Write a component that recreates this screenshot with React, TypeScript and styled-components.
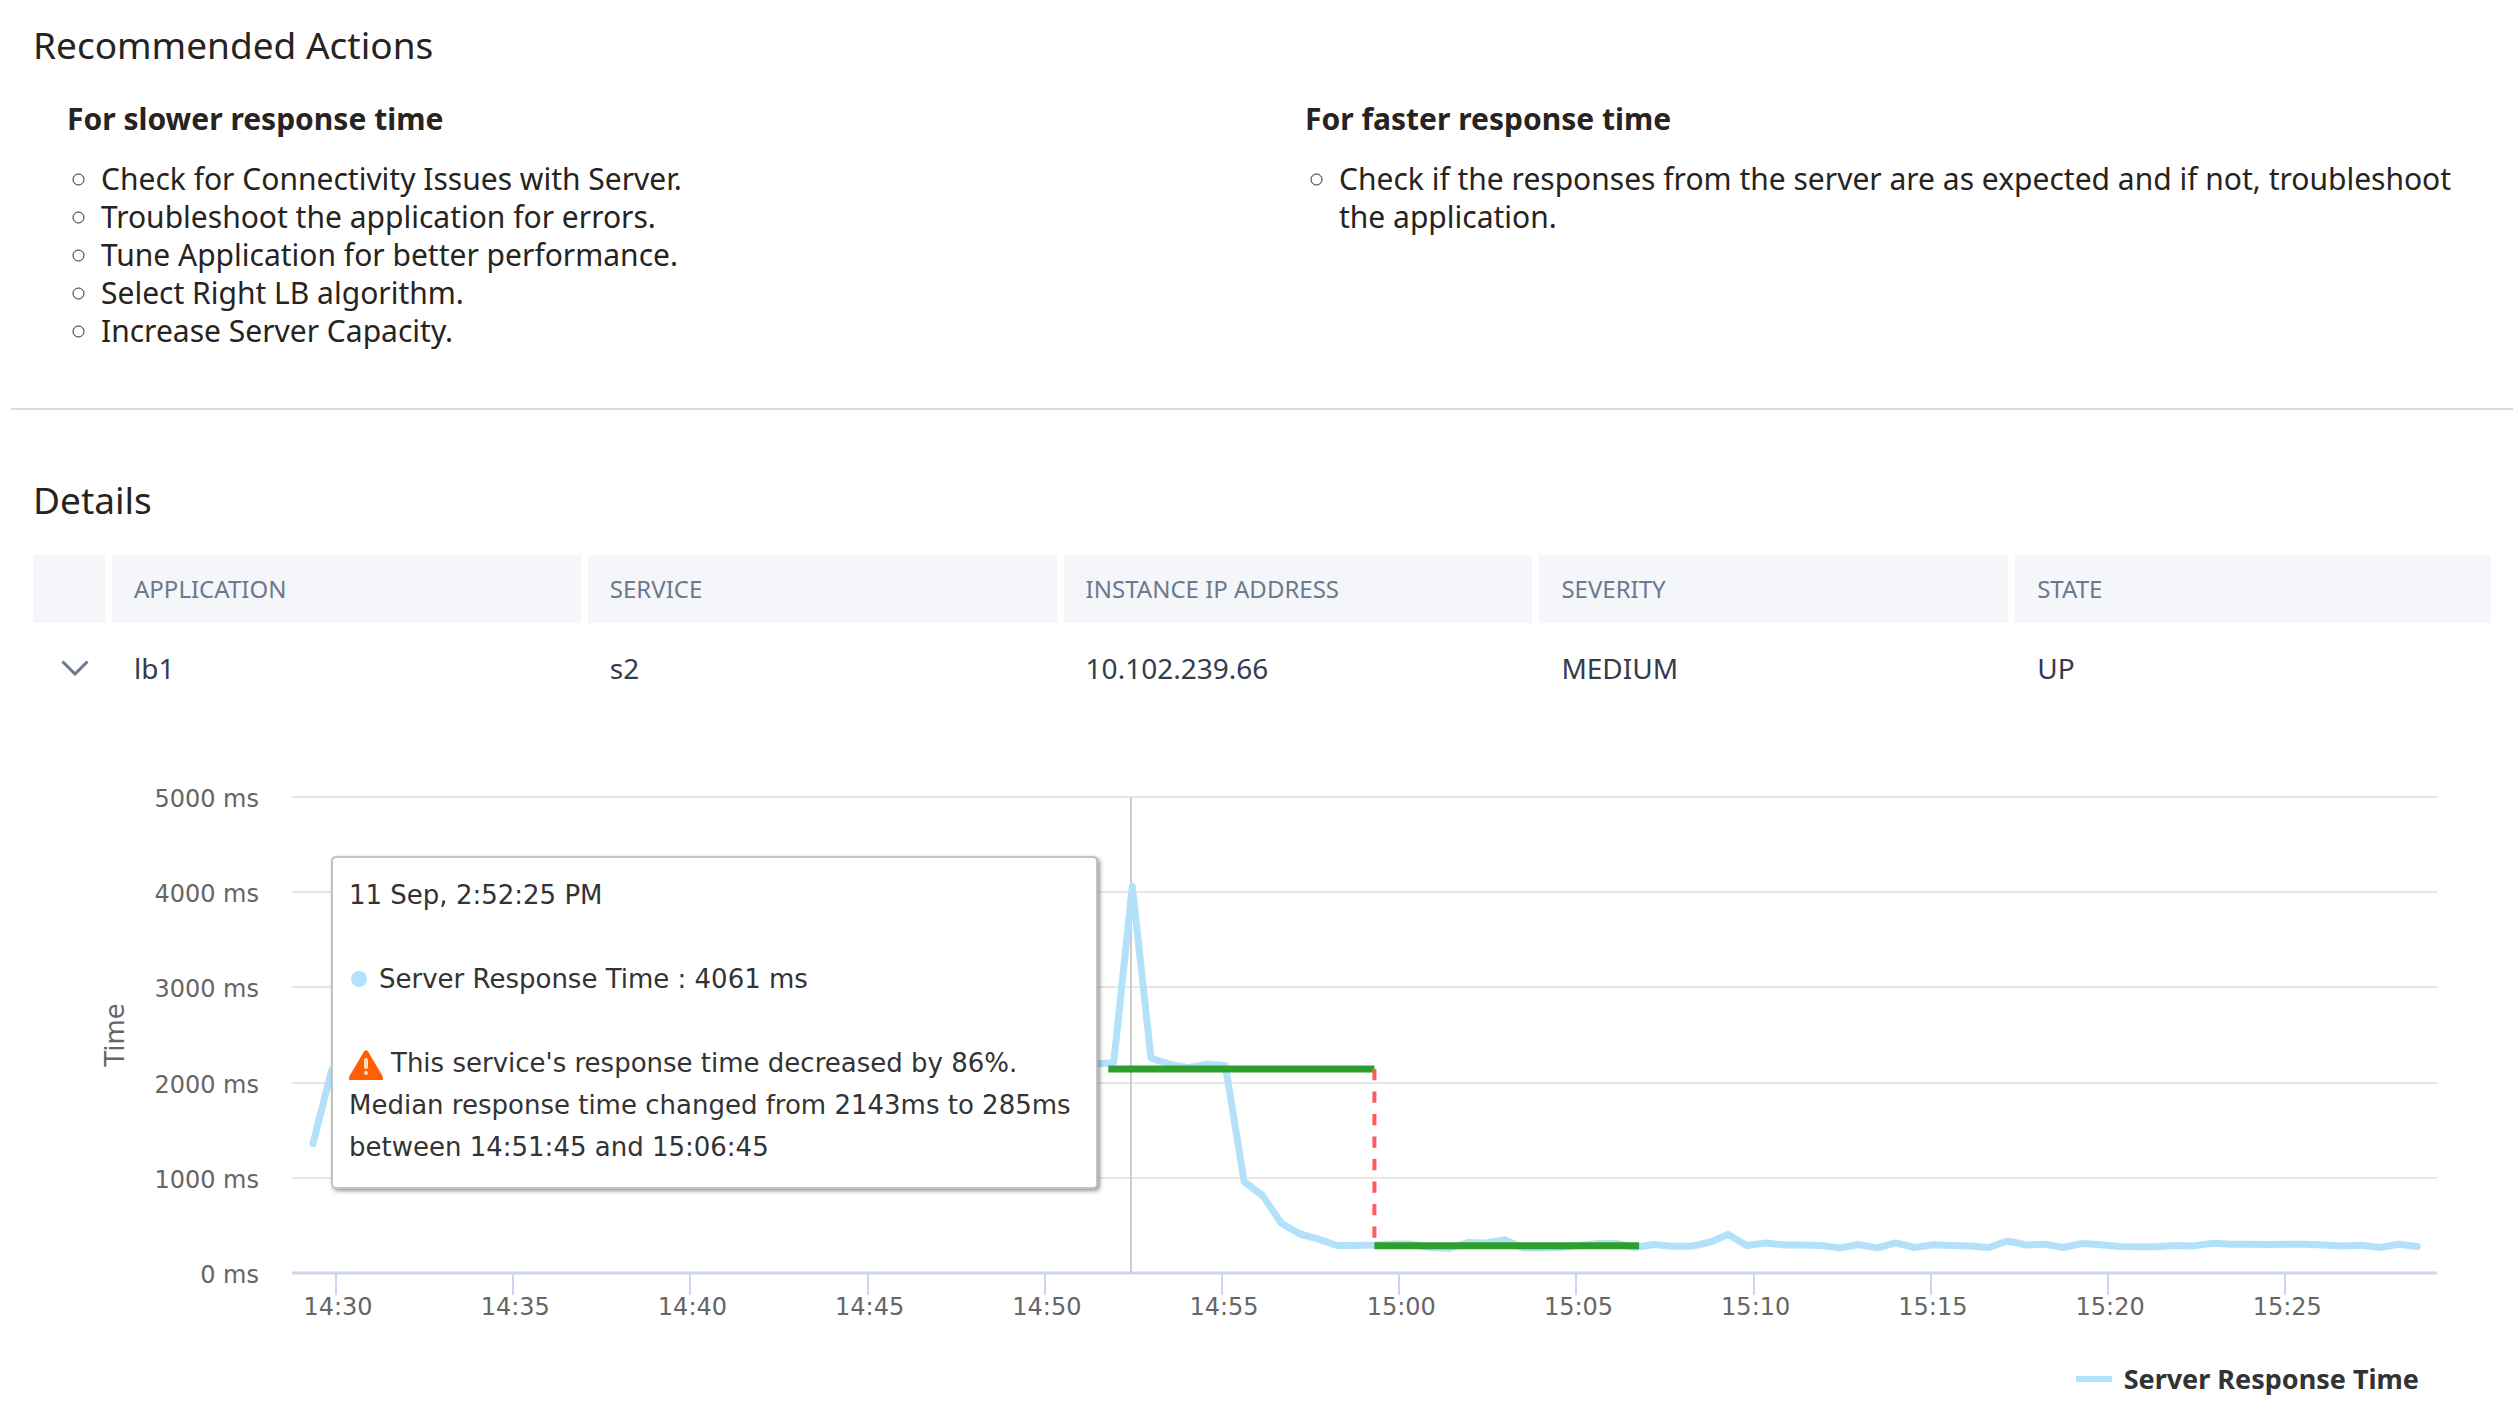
import React, { useLayoutEffect, useRef, useState } from "react";
import styled, { createGlobalStyle } from "styled-components";

const bodyFont = `"Noto Sans", "Open Sans", sans-serif`;
const chartFont = `"DejaVu Sans", "Lucida Grande", sans-serif`;

const GlobalStyle = createGlobalStyle`
  *, *::before, *::after { box-sizing: border-box; }
  body { margin: 0; background: #fff; color: #272320; font-family: ${bodyFont}; }
`;

const Page = styled.main`
  padding-top: 20px;
`;

const SectionTitle = styled.h2`
  margin: 0 33px;
  font-size: 37px;
  line-height: 50px;
  font-weight: 400;
`;

const ActionColumns = styled.div`
  display: grid;
  grid-template-columns: 1fr 1fr;
  margin: 30px 9px 0 33px;
  padding-bottom: 58px;
`;

const ActionGroup = styled.div`
  padding: 0 34px;
`;

const ActionTitle = styled.h3`
  margin: 0 0 22px;
  font-size: 30px;
  line-height: 38px;
  font-weight: 700;
`;

const ActionList = styled.ul`
  margin: 0;
  padding-left: 34px;
  list-style: circle;
  font-size: 30px;
  line-height: 38px;
`;

const Divider = styled.hr`
  margin: 0 5px 65px 11px;
  border: 0;
  border-top: 2px solid #dcdce2;
`;

const DetailsBody = styled.div`
  margin: 30px 27px 0 33px;
`;

const DetailsTable = styled.table`
  width: 100%;
  table-layout: fixed;
  border-collapse: separate;
  border-spacing: 0;
  text-align: left;
`;

const ToggleCol = styled.col`
  width: 79px;
`;

const HeadCell = styled.th`
  height: 68px;
  padding: 0 22px;
  border-right: 7px solid #fff;
  background: #f5f6fa;
  color: #6b798e;
  font-size: 24px;
  line-height: 34px;
  font-weight: 400;
  &:last-child { border-right: 0; }
`;

const Cell = styled.td`
  height: 90px;
  padding: 0 22px;
  color: #333c4e;
  font-size: 28px;
  line-height: 38px;
`;

const ToggleCell = styled(Cell)`
  padding: 0 0 0 26px;
`;

const ToggleButton = styled.button`
  display: flex;
  align-items: center;
  justify-content: center;
  width: 32px;
  height: 32px;
  padding: 0;
  border: 0;
  background: none;
  cursor: pointer;
`;

const ChartArea = styled.section`
  position: relative;
`;

const Plot = styled.svg`
  display: block;
  width: 100%;
  height: 627px;
  font-family: ${chartFont};
`;

const AxisText = styled.text`
  font-size: 24px;
  fill: #666;
`;

const AxisTitle = styled.text`
  font-size: 26px;
  fill: #666;
`;

const Tooltip = styled.div`
  position: absolute;
  top: 143px;
  width: 767px;
  padding: 16px 14px 19px 16px;
  transform: translateX(-100%);
  border: 2px solid #c2c2c2;
  border-radius: 5px;
  background: #fff;
  box-shadow: 2px 2px 4px rgba(0, 0, 0, 0.42);
  color: #333;
  font-family: ${chartFont};
  font-size: 26px;
  line-height: 42px;
  white-space: nowrap;
`;

const TooltipLine = styled.p`
  margin: 0 0 42px;
  &:last-child { margin: 0; }
`;

const SeriesLine = styled(TooltipLine)`
  display: flex;
  align-items: center;
  gap: 12px;
`;

const SeriesDot = styled.span`
  width: 16px;
  height: 16px;
  margin-left: 2px;
  border-radius: 50%;
  background: #b3e1fa;
`;

const AlertIcon = styled.svg`
  margin-right: 8px;
  vertical-align: -8px;
`;

const Legend = styled.div`
  display: flex;
  justify-content: flex-end;
  padding: 20px 72px 26px 0;
`;

const LegendItem = styled.button`
  display: flex;
  align-items: center;
  gap: 12px;
  padding: 0;
  border: 0;
  background: none;
  color: #333;
  font-family: ${bodyFont};
  font-size: 27px;
  line-height: 38px;
  font-weight: 700;
  cursor: pointer;
`;

const LegendSwatch = styled.span`
  width: 36px;
  height: 6px;
  background: #b3e1fa;
`;

const slower = [
  "Check for Connectivity Issues with Server.",
  "Troubleshoot the application for errors.",
  "Tune Application for better performance.",
  "Select Right LB algorithm.",
  "Increase Server Capacity.",
];
const faster = [
  "Check if the responses from the server are as expected and if not, troubleshoot the application.",
];

const columns = ["APPLICATION", "SERVICE", "INSTANCE IP ADDRESS", "SEVERITY", "STATE"];
const record = ["lb1", "s2", "10.102.239.66", "MEDIUM", "UP"];

// Response times in ms, one sample per interval.
const samples = [
  1359, 2130, ...Array.from({ length: 40 }, () => 2190),
  2198, 2209, 4061, 2256, 2193, 2158, 2194, 2177, 960, 813, 523, 410, 356, 289, 289, 293,
  304, 304, 268, 257, 320, 315, 351, 262, 262, 268, 289, 310, 310, 268, 299, 281,
  281, 323, 404, 289, 315, 294, 294, 289, 264, 299, 264, 317, 268, 296, 289, 283,
  268, 336, 294, 302, 268, 310, 296, 278, 275, 275, 289, 285, 313, 302, 302, 299,
  302, 302, 294, 285, 292, 268, 302, 278,
];
const PEAK = 44;

// Time domain in minutes relative to 14:30.
const DOMAIN_START = -1.242;
const DOMAIN_END = 59.28;
const FIRST_SAMPLE = -0.649;
const SAMPLE_STEP = 0.5254;

const LEFT = 259;
const RIGHT = 54;
const TOP = 84;
const BOTTOM = 560;

const tickMinutes = Array.from({ length: 12 }, (_, i) => i * 5);
const clock = (m: number) => {
  const total = 14 * 60 + 30 + m;
  return `${Math.floor(total / 60)}:${String(total % 60).padStart(2, "0")}`;
};

function ResponseChart() {
  const ref = useRef<HTMLElement>(null);
  const [width, setWidth] = useState(2458);

  useLayoutEffect(() => {
    const el = ref.current;
    if (!el) return;
    const update = () => setWidth(el.clientWidth);
    update();
    const observer = new ResizeObserver(update);
    observer.observe(el);
    return () => observer.disconnect();
  }, []);

  const x = (m: number) =>
    LEFT + ((m - DOMAIN_START) / (DOMAIN_END - DOMAIN_START)) * (width - LEFT - RIGHT);
  const y = (ms: number) => BOTTOM - (ms / 5000) * (BOTTOM - TOP);
  const sampleX = (i: number) => x(FIRST_SAMPLE + i * SAMPLE_STEP);
  const points = samples.map((v, i) => `${sampleX(i).toFixed(1)},${y(v).toFixed(1)}`).join(" ");
  const crosshair = Math.round(sampleX(PEAK)) - 1;
  const changeX = sampleX(57);

  return (
    <ChartArea ref={ref} aria-label="Server response time">
      <Plot>
        {[1000, 2000, 3000, 4000, 5000].map((v) => (
          <line key={v} x1={LEFT} x2={width - RIGHT} y1={Math.round(y(v))} y2={Math.round(y(v))} stroke="#e6e6e6" strokeWidth={2} />
        ))}
        {[0, 1000, 2000, 3000, 4000, 5000].map((v) => (
          <AxisText key={v} x={226} y={Math.round(y(v)) + 10} textAnchor="end">{`${v} ms`}</AxisText>
        ))}
        <line x1={LEFT} x2={width - RIGHT} y1={BOTTOM} y2={BOTTOM} stroke="#ccd6eb" strokeWidth={3} />
        {tickMinutes.map((m) => (
          <g key={m}>
            <line x1={Math.round(x(m))} x2={Math.round(x(m))} y1={BOTTOM} y2={BOTTOM + 22} stroke="#ccd6eb" strokeWidth={2} />
            <AxisText x={x(m) + 2} y={BOTTOM + 42} textAnchor="middle">{clock(m)}</AxisText>
          </g>
        ))}
        <AxisTitle transform="translate(91 322) rotate(-90)" textAnchor="middle">Time</AxisTitle>
        <line x1={crosshair} x2={crosshair} y1={TOP} y2={BOTTOM} stroke="#ccc" strokeWidth={2} />
        <polyline points={points} fill="none" stroke="#b3e1fa" strokeWidth={7} strokeLinejoin="round" strokeLinecap="round" />
        <line x1={x(21.79)} x2={changeX} y1={y(2143)} y2={y(2143)} stroke="#2ca02c" strokeWidth={7} />
        <line x1={changeX} x2={sampleX(71) + 4} y1={y(285)} y2={y(285)} stroke="#2ca02c" strokeWidth={7} />
        <line x1={changeX} x2={changeX} y1={y(2143)} y2={y(310)} stroke="#ff5a5f" strokeWidth={4} strokeDasharray="11.25 11.25" />
      </Plot>
      <Tooltip role="tooltip" style={{ left: crosshair - 33 }}>
        <TooltipLine>11 Sep, 2:52:25 PM</TooltipLine>
        <SeriesLine>
          <SeriesDot />
          Server Response Time : 4061 ms
        </SeriesLine>
        <TooltipLine>
          <AlertIcon width="34" height="30" viewBox="0 0 34 30" aria-hidden="true">
            <path d="M15 1.500Q17-1 19 1.500L33.500 26Q34 28 34 30H0Q0 28 .5 26Z" fill="#ff5f00" />
            <rect x="15" y="8" width="4" height="11" rx="2" fill="#ffd9c4" />
            <rect x="15" y="21" width="4" height="4" rx="2" fill="#ffd9c4" />
          </AlertIcon>
          This service's response time decreased by 86%.
          <br />
          Median response time changed from 2143ms to 285ms
          <br />
          between 14:51:45 and 15:06:45
        </TooltipLine>
      </Tooltip>
      <Legend>
        <LegendItem type="button">
          <LegendSwatch />
          Server Response Time
        </LegendItem>
      </Legend>
    </ChartArea>
  );
}

function Actions({ title, items }: { title: string; items: string[] }) {
  return (
    <ActionGroup>
      <ActionTitle>{title}</ActionTitle>
      <ActionList>
        {items.map((item) => (
          <li key={item}>{item}</li>
        ))}
      </ActionList>
    </ActionGroup>
  );
}

export default function App() {
  const [open, setOpen] = useState(true);
  return (
    <Page>
      <GlobalStyle />
      <SectionTitle>Recommended Actions</SectionTitle>
      <ActionColumns>
        <Actions title="For slower response time" items={slower} />
        <Actions title="For faster response time" items={faster} />
      </ActionColumns>
      <Divider />
      <SectionTitle>Details</SectionTitle>
      <DetailsBody>
        <DetailsTable>
          <colgroup>
            <ToggleCol />
            {columns.map((c) => (
              <col key={c} />
            ))}
          </colgroup>
          <thead>
            <tr>
              <HeadCell aria-label="Expand" />
              {columns.map((c) => (
                <HeadCell key={c} scope="col">{c}</HeadCell>
              ))}
            </tr>
          </thead>
          <tbody>
            <tr>
              <ToggleCell>
                <ToggleButton type="button" aria-label="Toggle details" aria-expanded={open} onClick={() => setOpen(!open)}>
                  <svg width="28" height="16" viewBox="0 0 28 16" fill="none" stroke="#6b798e" strokeWidth="3">
                    <path d="M1.500 1.500 14 14 26.500 1.500" />
                  </svg>
                </ToggleButton>
              </ToggleCell>
              {record.map((v) => (
                <Cell key={v}>{v}</Cell>
              ))}
            </tr>
          </tbody>
        </DetailsTable>
        {open && <ResponseChart />}
      </DetailsBody>
    </Page>
  );
}
